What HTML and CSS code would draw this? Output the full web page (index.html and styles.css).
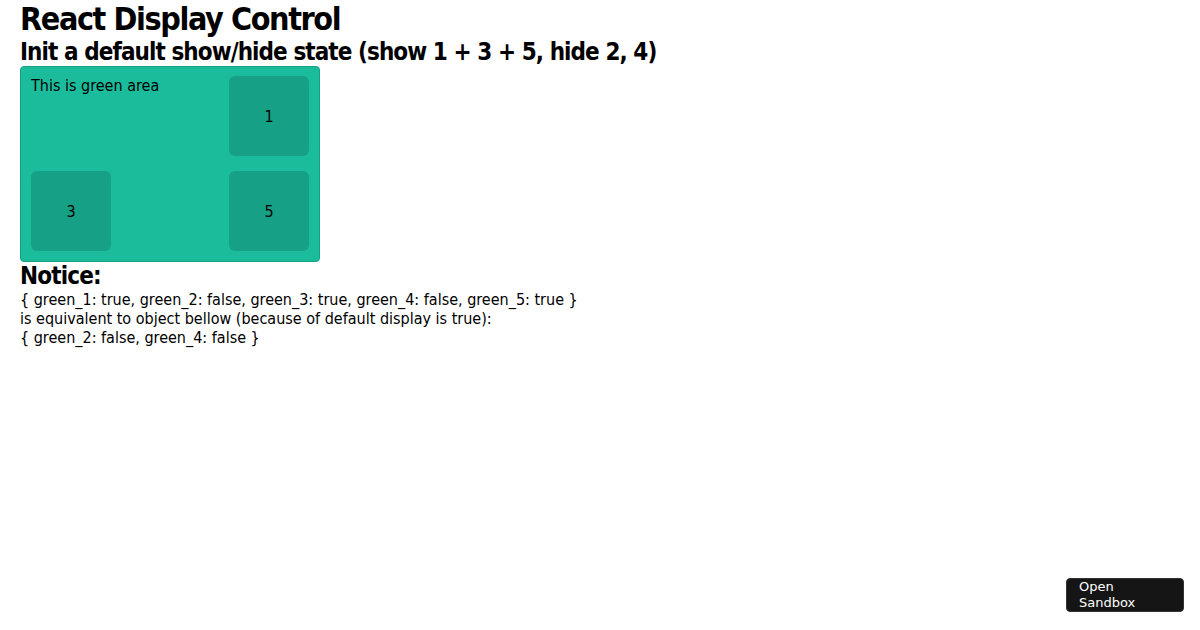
FILE: index.html
```html
<!DOCTYPE html>
<html>
<head>
<meta charset="utf-8">
<link rel="stylesheet" href="styles.css">
</head>
<body>
<div class="page">
  <h1 class="title">React Display Control</h1>
  <h2 class="subtitle">Init a default show/hide state (show 1 + 3 + 5, hide 2, 4)</h2>
  <div class="green-area">
    <div class="label">This is green area</div>
    <div class="box box-1">1</div>
    <div class="box box-3">3</div>
    <div class="box box-5">5</div>
  </div>
  <h3 class="notice">Notice:</h3>
  <div class="lines">
    <div>{ green_1: true, green_2: false, green_3: true, green_4: false, green_5: true }</div>
    <div>is equivalent to object bellow (because of default display is true):</div>
    <div>{ green_2: false, green_4: false }</div>
  </div>
</div>
<button class="sandbox">Open<br>Sandbox</button>
</body>
</html>
```
FILE: styles.css
```css
html, body { margin: 0; padding: 0; background: #fff; }
body {
  font-family: "DejaVu Sans Condensed", "DejaVu Sans", sans-serif;
  color: #000;
  height: 630px;
  position: relative;
}
.page { padding: 0 20px; }
.title { font-size: 32px; font-weight: bold; margin: 0; line-height: 37px; padding-top: 1px; letter-spacing: -1.4px; }
.subtitle { font-size: 24px; font-weight: bold; margin: 0; line-height: 28px; letter-spacing: -0.93px; }
.green-area {
  box-sizing: border-box;
  width: 300px;
  height: 196px;
  background: #1abc9c;
  border: 1px solid #16a085;
  border-radius: 4px;
  padding: 9px 10px 10px;
  display: grid;
  grid-template-columns: 80px 80px 80px;
  grid-template-rows: 80px 80px;
  justify-content: space-between;
  row-gap: 15px;
  font-size: 16px;
}
.label { grid-column: 1 / 3; grid-row: 1; white-space: nowrap; line-height: 19px; }
.box {
  background: #16a085;
  border-radius: 6px;
  display: flex;
  align-items: center;
  justify-content: center;
}
.box-1 { grid-column: 3; grid-row: 1; }
.box-3 { grid-column: 1; grid-row: 2; }
.box-5 { grid-column: 3; grid-row: 2; }
.notice { font-size: 24px; font-weight: bold; margin: 0; line-height: 28px; letter-spacing: -0.85px; }
.lines { font-size: 16px; line-height: 19px; }
.sandbox {
  position: absolute;
  right: 16px;
  bottom: 18px;
  width: 118px;
  height: 34px;
  background: #151515;
  color: #fff;
  border: 1px solid #333;
  border-radius: 4px;
  font-family: "DejaVu Sans", sans-serif;
  font-size: 13px;
  line-height: 16px;
  text-align: left;
  padding: 0 12px;
}
```
